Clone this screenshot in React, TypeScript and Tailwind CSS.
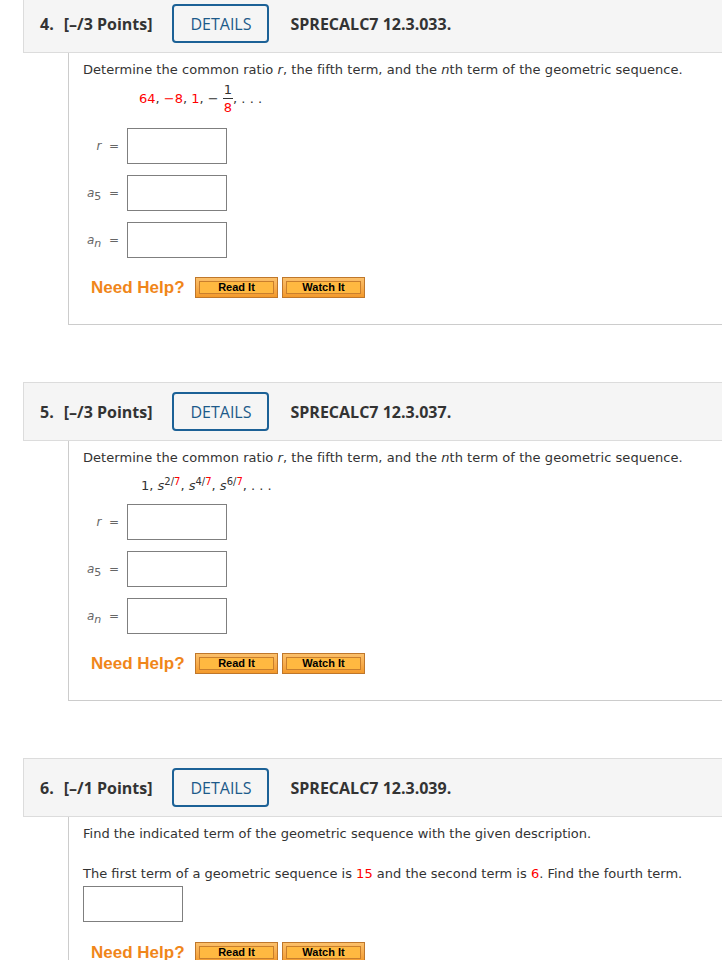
import { FC, ReactNode } from 'react';

const RED = 'text-[#ff0000]';

const Header: FC<{ num: string; points: string; code: string }> = ({ num, points, code }) => (
  <div className="flex h-[59px] items-center border border-[#dcdcdc] bg-[#f5f5f5] pl-[16px] font-['Open_Sans',sans-serif] text-[16px] font-bold text-[#333]">
    <span>{num}</span>
    <span className="ml-[10px]">{points}</span>
    <span className="ml-[20px] flex h-[39px] w-[97px] items-center justify-center rounded-[4px] border-2 border-[#1c6196] font-normal text-[#1c5a8a]">
      DETAILS
    </span>
    <span className="ml-[21px]">{code}</span>
  </div>
);

const HelpButton: FC<{ label: string }> = ({ label }) => (
  <span className="flex h-[21px] w-[83px] border border-[#bf772b] bg-gradient-to-b from-[#fbc06a] to-[#f39a2a] p-[3px]">
    <span className="flex flex-1 items-center justify-center border border-[#c97f2d] bg-[#ffb941] font-['Liberation_Sans',Arial,sans-serif] text-[11px] leading-none font-bold text-black">
      {label}
    </span>
  </span>
);

const NeedHelp: FC = () => (
  <div className="flex items-center">
    <span className="ml-[8px] w-[104px] font-['Liberation_Sans',Arial,sans-serif] text-[17px] font-bold text-[#f0861a]">
      Need Help?
    </span>
    <div className="flex gap-[4px]">
      <HelpButton label="Read It" />
      <HelpButton label="Watch It" />
    </div>
  </div>
);

const AnswerBox: FC = () => <div className="h-[36px] w-[100px] border border-[#7f7f7f] bg-white" />;

const AnswerRow: FC<{ label: ReactNode }> = ({ label }) => (
  <div className="flex items-center">
    <div className="w-[44px] pr-[8px] text-right text-[12px] text-[#666]">{label}</div>
    <AnswerBox />
  </div>
);

const ThreeAnswers: FC = () => (
  <div className="flex flex-col gap-[11px]">
    <AnswerRow label={<><i>r</i>&nbsp;&nbsp;=</>} />
    <AnswerRow label={<><i>a</i><sub className="text-[11px]">5</sub>&nbsp;&nbsp;=</>} />
    <AnswerRow label={<><i>a</i><sub className="text-[11px]"><i>n</i></sub>&nbsp;&nbsp;=</>} />
  </div>
);

const Body: FC<{ children: ReactNode }> = ({ children }) => (
  <div className="ml-[45px] border-b border-l border-[#cccccc] pt-[8px] pb-[26px] pl-[14px] font-['DejaVu_Sans',Verdana,sans-serif] text-[13px] leading-[18px] text-[#333]">
    {children}
  </div>
);

const Prompt: FC = () => (
  <p className="tracking-[0.05px]">
    Determine the common ratio <i>r</i>, the fifth term, and the <i>n</i>th term of the geometric sequence.
  </p>
);

export default function App() {
  return (
    <div className="min-h-screen w-[722px] overflow-hidden bg-white">
      <div className="-mt-[6px] w-[760px] pl-[23px]">
        {/* Question 4 */}
        <Header num="4." points="[–/3 Points]" code="SPRECALC7 12.3.033." />
        <Body>
          <Prompt />
          <div className="mt-[5px] ml-[56px] flex h-[30px] items-center">
            <span className={RED}>64</span>,&nbsp;<span className={RED}>−8</span>,&nbsp;<span className={RED}>1</span>,&nbsp;−&nbsp;
            <span className="inline-flex flex-col items-center leading-[14px]">
              <span className="px-[1px] pb-[1px]">1</span>
              <span className="h-px w-full bg-[#333]" />
              <span className={`pt-[2px] ${RED}`}>8</span>
            </span>
            ,&nbsp;.&nbsp;.&nbsp;.
          </div>
          <div className="mt-[14px]">
            <ThreeAnswers />
          </div>
          <div className="mt-[19px]">
            <NeedHelp />
          </div>
        </Body>

        {/* Question 5 */}
        <div className="mt-[57px]">
          <Header num="5." points="[–/3 Points]" code="SPRECALC7 12.3.037." />
        </div>
        <Body>
          <Prompt />
          <div className="mt-[7px] ml-[58px] leading-[24px]">
            1, <i>s</i>
            <sup className="text-[10px]">
              2/<span className={RED}>7</span>
            </sup>
            , <i>s</i>
            <sup className="text-[10px]">
              4/<span className={RED}>7</span>
            </sup>
            , <i>s</i>
            <sup className="text-[10px]">
              6/<span className={RED}>7</span>
            </sup>
            , . . .
          </div>
          <div className="mt-[6px]">
            <ThreeAnswers />
          </div>
          <div className="mt-[19px]">
            <NeedHelp />
          </div>
        </Body>

        {/* Question 6 */}
        <div className="mt-[57px]">
          <Header num="6." points="[–/1 Points]" code="SPRECALC7 12.3.039." />
        </div>
        <Body>
          <p>Find the indicated term of the geometric sequence with the given description.</p>
          <p className="mt-[22px]">
            The first term of a geometric sequence is <span className={RED}>15</span> and the second term is{' '}
            <span className={RED}>6</span>. Find the fourth term.
          </p>
          <div className="mt-[3px]">
            <AnswerBox />
          </div>
          <div className="mt-[20px]">
            <NeedHelp />
          </div>
        </Body>
      </div>
    </div>
  );
}
